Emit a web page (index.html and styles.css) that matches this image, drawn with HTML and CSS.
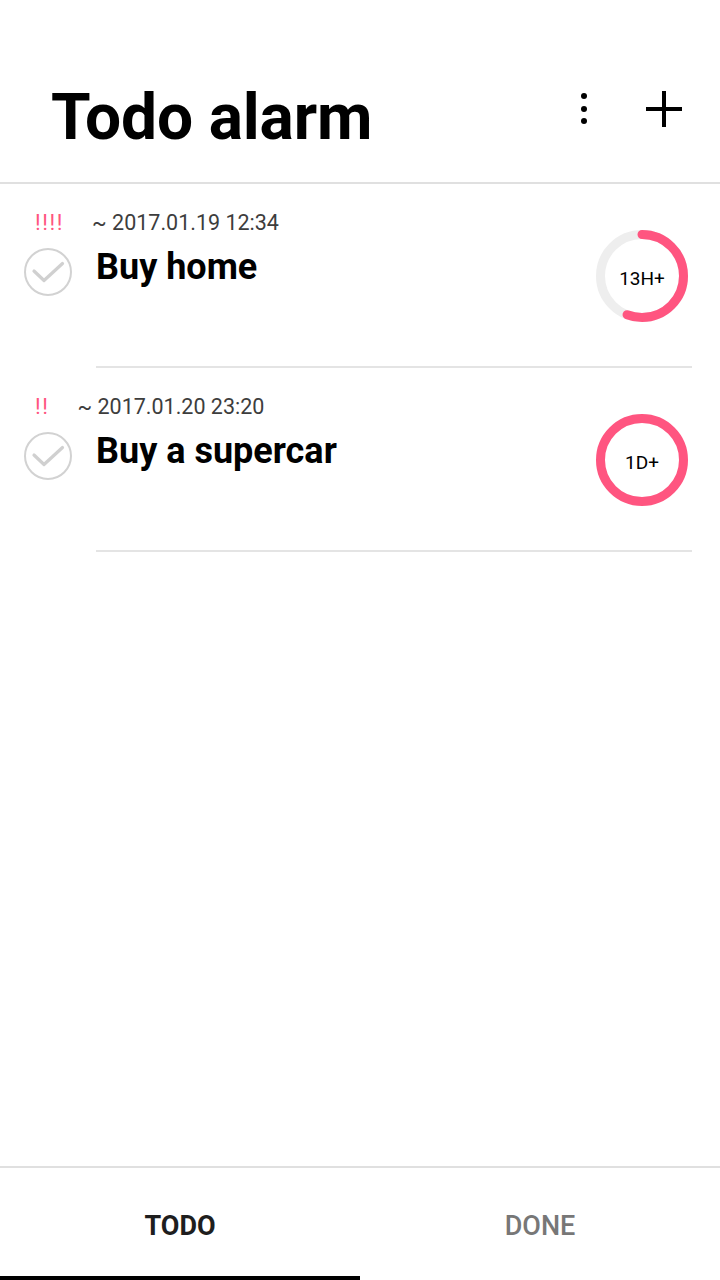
FILE: index.html
```html
<!DOCTYPE html>
<html lang="en">
<head>
<meta charset="utf-8">
<title>Todo alarm</title>
<link rel="stylesheet" href="styles.css">
</head>
<body>
<div class="app">
  <header class="header">
    <h1 class="title">Todo alarm</h1>
    <div class="actions">
      <svg class="icon" width="48" height="48" viewBox="0 0 48 48">
        <circle cx="24" cy="11" r="3" fill="#000"/>
        <circle cx="24" cy="24" r="3" fill="#000"/>
        <circle cx="24" cy="36" r="3" fill="#000"/>
      </svg>
      <svg class="icon" width="48" height="48" viewBox="0 0 48 48">
        <path d="M24 6 V42 M6 24 H42" stroke="#000" stroke-width="4" fill="none"/>
      </svg>
    </div>
  </header>

  <main class="list">
    <div class="item">
      <div class="item-body">
        <div class="item-main">
          <div class="meta"><span class="marks">!!!!</span><span class="date">~ 2017.01.19 12:34</span></div>
          <div class="row">
            <svg class="check" width="48" height="48" viewBox="0 0 48 48">
              <circle cx="24" cy="24" r="23" fill="none" stroke="#d2d2d2" stroke-width="2"/>
              <path d="M10 23 L20 32.5 L38.5 15.5" fill="none" stroke="#d0d0d0" stroke-width="3.2" stroke-linecap="round" stroke-linejoin="round"/>
            </svg>
            <div class="name">Buy home</div>
          </div>
        </div>
        <div class="ring">
          <svg width="92" height="92" viewBox="0 0 92 92">
            <circle cx="46" cy="46" r="41.5" fill="none" stroke="#eeeeee" stroke-width="9"/>
            <circle cx="46" cy="46" r="41.5" fill="none" stroke="#ff5580" stroke-width="9" stroke-linecap="round" stroke-dasharray="145.4 400" transform="rotate(-90 46 46)"/>
          </svg>
          <span class="ring-label">13H+</span>
        </div>
      </div>
      <div class="divider"></div>
    </div>

    <div class="item">
      <div class="item-body">
        <div class="item-main">
          <div class="meta"><span class="marks">!!</span><span class="date">~ 2017.01.20 23:20</span></div>
          <div class="row">
            <svg class="check" width="48" height="48" viewBox="0 0 48 48">
              <circle cx="24" cy="24" r="23" fill="none" stroke="#d2d2d2" stroke-width="2"/>
              <path d="M10 23 L20 32.5 L38.5 15.5" fill="none" stroke="#d0d0d0" stroke-width="3.2" stroke-linecap="round" stroke-linejoin="round"/>
            </svg>
            <div class="name">Buy a supercar</div>
          </div>
        </div>
        <div class="ring">
          <svg width="92" height="92" viewBox="0 0 92 92">
            <circle cx="46" cy="46" r="41.5" fill="none" stroke="#ff5580" stroke-width="9"/>
          </svg>
          <span class="ring-label">1D+</span>
        </div>
      </div>
      <div class="divider"></div>
    </div>
  </main>

  <nav class="tabs">
    <div class="tab active">TODO</div>
    <div class="tab">DONE</div>
  </nav>
</div>
</body>
</html>
```

FILE: styles.css
```css
html, body {
  margin: 0;
  padding: 0;
  background: #ffffff;
}

body {
  font-family: Roboto, "Liberation Sans", sans-serif;
  color: #000;
}

.app {
  width: 720px;
  height: 1280px;
  display: flex;
  flex-direction: column;
  overflow: hidden;
}

.header {
  border-bottom: 2px solid #e0e0e0;
  display: flex;
  align-items: flex-start;
  padding: 85px 32px 0 51px;
  height: 97px;
}

.title {
  flex: 1;
  margin: 2px 0 0 0;
  font-size: 64px;
  line-height: 62px;
  font-weight: 700;
  letter-spacing: -0.15px;
}

.actions {
  display: flex;
  gap: 32px;
}

.icon {
  display: block;
}

.list {
  flex: 1;
}

.item-body {
  height: 153px;
  padding-top: 29px;
  display: flex;
  align-items: flex-start;
}

.item-main {
  flex: 1;
}

.meta {
  padding-left: 35px;
  height: 20px;
  line-height: 20px;
  white-space: nowrap;
}

.marks {
  color: #ff5580;
  font-size: 22px;
  letter-spacing: 1.6px;
  margin-right: 28px;
}

.date {
  color: #3d3d3d;
  font-size: 21.5px;
}

.row {
  display: flex;
  align-items: flex-start;
  margin-top: 15px;
  padding-left: 24px;
}

.check {
  display: block;
  flex: none;
}

.name {
  margin: 3px 0 0 24px;
  font-size: 36px;
  line-height: 32px;
  font-weight: 700;
}

.ring {
  position: relative;
  width: 92px;
  height: 92px;
  margin: 17px 32px 0 0;
  flex: none;
}

.ring svg {
  display: block;
}

.ring-label {
  position: absolute;
  inset: 0;
  display: flex;
  align-items: center;
  justify-content: center;
  padding-top: 5px;
  font-size: 19px;
  color: #000;
}

.divider {
  height: 2px;
  background: #e4e4e4;
  margin: 0 28px 0 96px;
}

.tabs {
  border-top: 2px solid #e0e0e0;
  display: flex;
  height: 112px;
  flex: none;
}

.tab {
  flex: 1;
  text-align: center;
  font-size: 27px;
  line-height: 27px;
  padding-top: 45px;
  font-weight: 500;
  color: #777777;
  box-sizing: border-box;
}

.tab.active {
  color: #1e1e1e;
  font-weight: 700;
  border-bottom: 4px solid #000;
}
```
